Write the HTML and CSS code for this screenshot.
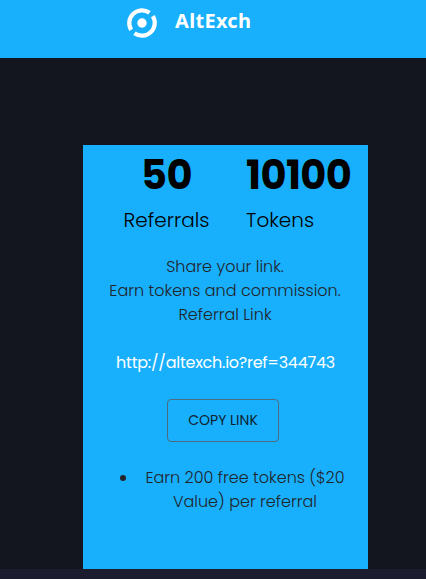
FILE: index.html
```
<!DOCTYPE html>
<html lang="en">
<head>
    <meta charset="UTF-8">
    <meta name="viewport" content="width=device-width, initial-scale=1.0">
    <title>AltExch</title>
    <link rel="stylesheet" href="styles.css">
</head>
<body>
    <header class="navbar">
        <svg class="logo" width="32" height="32" viewBox="0 0 32 32" fill="none" stroke="#fff">
            <circle cx="16" cy="16" r="4.7" fill="#fff" stroke="none"/>
            <path d="M23.5 5.7A12.8 12.8 0 0 0 5.2 22.9" stroke-width="4.2"/>
            <path d="M26.8 9.1A12.8 12.8 0 0 1 8.5 26.3" stroke-width="4.2"/>
        </svg>
        <span class="brand">AltExch</span>
    </header>

    <main class="content">
        <div class="card">
            <div class="stats">
                <div class="stat">
                    <div class="stat-value">50</div>
                    <div class="stat-label">Referrals</div>
                </div>
                <div class="stat stat-tokens">
                    <div class="stat-value">10100</div>
                    <div class="stat-label">Tokens</div>
                </div>
            </div>
            <p class="share">
                Share your link.<br>
                Earn tokens and commission.<br>
                Referral Link
            </p>
            <p class="ref-link">http://altexch.io?ref=344743</p>
            <button class="copy-btn">COPY LINK</button>
            <ul class="rewards">
                <li>Earn 200 free tokens ($20 Value) per referral</li>
            </ul>
        </div>
    </main>

    <footer class="footer"></footer>
</body>
</html>
```

FILE: styles.css
```
* {
    box-sizing: border-box;
}

body {
    margin: 0;
    height: 579px;
    overflow: hidden;
    background-color: #13151f;
    font-family: "Poppins", "Inter", sans-serif;
    font-size: 16px;
    font-weight: 300;
    line-height: 24px;
    color: #212529;
}

.navbar {
    display: flex;
    height: 58px;
    padding: 7px 0 0 126px;
    background-color: #18affd;
}

.brand {
    margin: 0 0 0 17px;
    font-family: "Noto Sans", sans-serif;
    font-size: 20px;
    font-weight: 700;
    line-height: 28px;
    letter-spacing: 0.3px;
    color: #fff;
}

.content {
    height: 511px;
    padding: 87px 0 0 83px;
}

.card {
    width: 285px;
    height: 424px;
    background-color: #18affd;
    text-align: center;
}

/* Stats */
.stats {
    display: flex;
    height: 110px;
    padding: 6px 0 0 40px;
    white-space: nowrap;
}

.stat {
    width: 87px;
}

.stat-tokens {
    margin-left: 36px;
    text-align: left;
}

.stat-value {
    font-size: 40px;
    font-weight: 700;
    line-height: 48px;
    letter-spacing: -0.6px;
    color: #000;
}

.stat-label {
    margin-top: 9px;
    font-size: 20px;
    color: #000;
}

.share {
    margin: 0 1px 0 0;
}

.ref-link {
    margin: 24px 0;
    font-weight: 400;
    letter-spacing: -0.25px;
    color: #fff;
}

.copy-btn {
    display: block;
    width: 112px;
    height: 43px;
    margin: 0 auto 0 84px;
    padding: 0;
    border: 1px solid #4f6b80;
    border-radius: 4px;
    background: transparent;
    font-family: inherit;
    font-size: 14px;
    font-weight: 400;
    color: #10222f;
}

.rewards {
    margin: 24px 0 0;
    padding: 0 16px 0 55px;
}

.footer {
    height: 10px;
    background-color: #1b1d2e;
}
```
